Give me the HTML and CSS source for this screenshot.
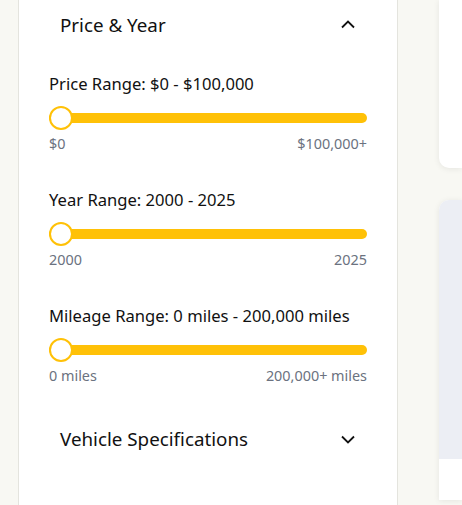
FILE: index.html
```html
<!DOCTYPE html>
<html>
<head>
<meta charset="utf-8">
<link rel="stylesheet" href="styles.css">
</head>
<body>
<div class="layout">
  <aside class="panel">
    <div class="section-head">
      <span class="section-title">Price &amp; Year</span>
      <svg class="chev" width="16" height="16" viewBox="0 0 16 16"><path d="M2 10.5 L8 4.5 L14 10.5" fill="none" stroke="#111" stroke-width="1.8"/></svg>
    </div>
    <div class="range-group">
      <div class="range-label">Price Range: $0 - $100,000</div>
      <div class="track"><span class="thumb"></span></div>
      <div class="range-ends"><span>$0</span><span>$100,000+</span></div>
    </div>
    <div class="range-group">
      <div class="range-label">Year Range: 2000 - 2025</div>
      <div class="track"><span class="thumb"></span></div>
      <div class="range-ends"><span>2000</span><span>2025</span></div>
    </div>
    <div class="range-group">
      <div class="range-label">Mileage Range: 0 miles - 200,000 miles</div>
      <div class="track"><span class="thumb"></span></div>
      <div class="range-ends"><span>0 miles</span><span>200,000+ miles</span></div>
    </div>
    <div class="section-head second">
      <span class="section-title">Vehicle Specifications</span>
      <svg class="chev" width="16" height="16" viewBox="0 0 16 16"><path d="M2 5.5 L8 11.5 L14 5.5" fill="none" stroke="#111" stroke-width="1.8"/></svg>
    </div>
  </aside>
  <main class="results">
    <div class="card card-top"></div>
    <div class="card card-second"><div class="card-media"></div></div>
  </main>
</div>
</body>
</html>
```
FILE: styles.css
```css
html, body { margin: 0; padding: 0; }
body {
  background: #f8f8f3;
  font-family: "Noto Sans", "Open Sans", sans-serif;
  color: #111;
  height: 505px;
  overflow: hidden;
}
.layout {
  display: flex;
  gap: 41px;
  padding-left: 18px;
  height: 505px;
}
.panel {
  width: 380px;
  flex: none;
  box-sizing: border-box;
  background: #fff;
  border-left: 1px solid #e4e4de;
  border-right: 1px solid #e4e4de;
  padding: 0 30px;
}
.section-head {
  display: flex;
  justify-content: space-between;
  align-items: center;
  padding: 10px 11px 0 11px;
  height: 30px;
}
.section-head.second { margin-top: 28px; }
.section-title { font-size: 18.8px; }
.chev { display: block; }
.range-group { margin-top: 33px; }
.range-group + .range-group { margin-top: 35px; }
.range-label { font-size: 16.6px; line-height: 22px; }
.track {
  position: relative;
  margin-top: 18px;
  height: 10px;
  border-radius: 5px;
  background: #ffc107;
}
.thumb {
  position: absolute;
  left: 0;
  top: -7px;
  width: 24px;
  height: 24px;
  box-sizing: border-box;
  border-radius: 50%;
  background: #fff;
  border: 2px solid #ffc107;
}
.range-ends {
  display: flex;
  justify-content: space-between;
  margin-top: 11px;
  font-size: 14.4px;
  line-height: 20px;
  color: #6b7280;
}
.results {
  flex: 1;
  display: flex;
  flex-direction: column;
  gap: 32px;
}
.card {
  flex: none;
  background: #fff;
  box-shadow: 0 1px 6px rgba(0,0,0,0.08);
}
.card-top { height: 168px; border-radius: 0 0 0 10px; }
.card-second { height: 300px; overflow: hidden; border-radius: 10px 0 0 0; }
.card-media { height: 259px; background: #eceef4; }
```
